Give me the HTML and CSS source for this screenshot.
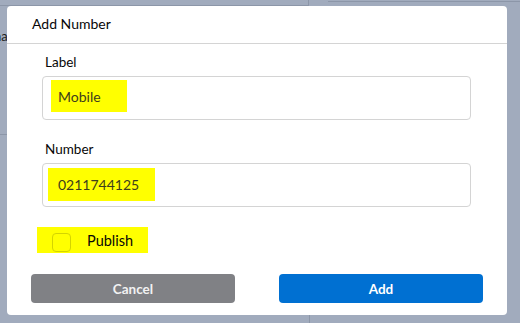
FILE: index.html
```html
<!DOCTYPE html>
<html>
<head>
<meta charset="utf-8">
<link rel="stylesheet" href="styles.css">
</head>
<body>
<div class="page">
  <div class="page-top">
    <div class="page-top-left"></div>
    <div class="page-top-right"></div>
  </div>
  <div class="page-row">
    <div class="page-col-left">
      <div class="page-cell"><span class="peek">na</span></div>
    </div>
    <div class="page-col-right"></div>
  </div>
</div>
<div class="modal">
  <div class="modal-header">Add Number</div>
  <div class="modal-body">
    <div class="field">
      <div class="field-label">Label</div>
      <div class="input"><span class="hl hl-label">Mobile</span></div>
    </div>
    <div class="field field-2">
      <div class="field-label">Number</div>
      <div class="input"><span class="hl hl-number">0211744125</span></div>
    </div>
    <div class="check-row">
      <label class="hl hl-check"><span class="box"></span><span class="check-text">Publish</span></label>
    </div>
  </div>
  <div class="modal-footer">
    <button class="btn btn-cancel">Cancel</button>
    <button class="btn btn-add">Add</button>
  </div>
</div>
</body>
</html>
```

FILE: styles.css
```css
* { box-sizing: border-box; }
html, body { margin: 0; padding: 0; }
body {
  width: 520px;
  height: 323px;
  background: #a1abbd;
  font-family: Lato, "Open Sans", "Liberation Sans", sans-serif;
  color: #080707;
  position: relative;
  overflow: hidden;
}
.page { width: 520px; height: 323px; }
.page-top { display: flex; height: 6px; }
.page-top-left {
  width: 309px;
  border-bottom: 1px solid #8c96a8;
  border-right: 1px solid #8c96a8;
}
.page-top-right {
  flex: 1;
  margin-left: 19px;
  height: 2px;
  border-bottom: 1px solid #8c96a8;
}
.page-row { display: flex; height: 317px; }
.page-col-left { width: 310px; border-right: 1px solid #8c96a8; }
.page-cell {
  height: 129px;
  border-bottom: 1px solid #8c96a8;
  padding-top: 21px;
  line-height: 16px;
}
.peek { font-size: 13px; margin-left: -6px; color: #202020; }
.modal {
  position: absolute;
  left: 7px;
  top: 6px;
  width: 500px;
  height: 309px;
  background: #fff;
  border-radius: 4px;
  display: flex;
  flex-direction: column;
}
.modal-header {
  height: 38px;
  border-bottom: 1px solid #d4d4d4;
  padding: 9px 0 0 25px;
  font-size: 14px;
  line-height: 18px;
}
.modal-body { padding: 9px 0 0 35px; flex: 1; }
.field-label {
  font-size: 13.5px;
  line-height: 18px;
  padding-left: 3px;
  margin-bottom: 5px;
}
.field-2 { margin-top: 20px; }
.input {
  width: 429px;
  height: 44px;
  border: 1px solid #d4d4d4;
  border-radius: 4px;
  position: relative;
}
.hl { background: #ffff00; display: inline-flex; align-items: center; }
.hl-label {
  margin: 3px 0 0 8px;
  height: 32px;
  width: 76px;
  padding-left: 7px;
  font-size: 14px;
  color: #3e3e1c;
}
.hl-number {
  margin: 4px 0 0 5px;
  height: 33px;
  width: 107px;
  padding-left: 10px;
  font-size: 14px;
  color: #3e3e1c;
}
.check-row { margin-top: 20px; margin-left: -5px; }
.hl-check {
  height: 26px;
  width: 111px;
  padding-left: 15px;
}
.box {
  width: 19px;
  height: 19px;
  border: 1px solid #d4d400;
  border-radius: 4px;
  margin-top: 4px;
}
.check-text { margin-left: 16px; font-size: 14.5px; color: #080707; }
.modal-footer {
  display: flex;
  justify-content: space-between;
  padding: 0 24px 12px 24px;
}
.btn {
  width: 204px;
  height: 29px;
  border: 0;
  border-radius: 4px;
  color: #fff;
  font-family: Lato, "Open Sans", "Liberation Sans", sans-serif;
  font-weight: bold;
  font-size: 13.5px;
}
.btn-cancel { background: #808185; color: #f2f2f2; }
.btn-add { background: #0070d2; }
```
